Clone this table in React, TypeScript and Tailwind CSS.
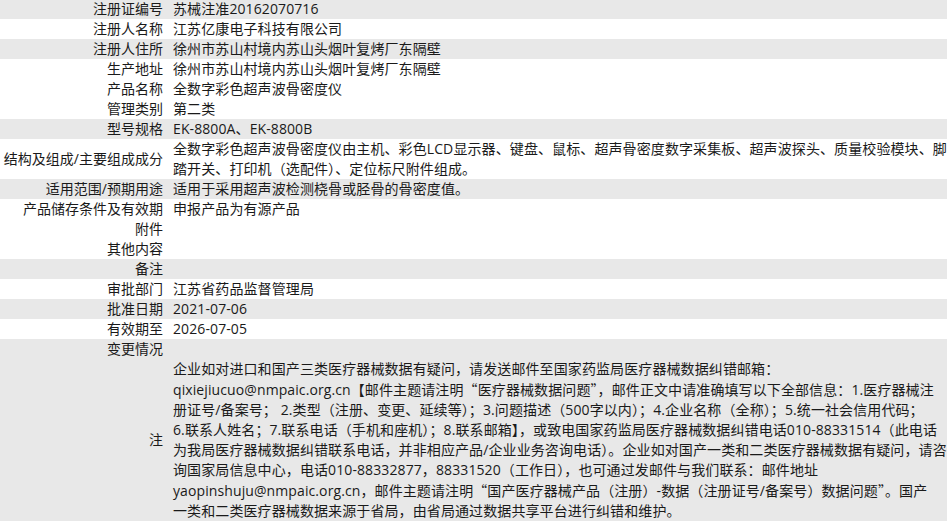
import { Fragment } from "react";

const rows: { label: string; value?: string[]; gray?: boolean }[] = [
  { label: "注册证编号", value: ["苏械注准20162070716"], gray: true },
  { label: "注册人名称", value: ["江苏亿康电子科技有限公司"] },
  { label: "注册人住所", value: ["徐州市苏山村境内苏山头烟叶复烤厂东隔壁"], gray: true },
  { label: "生产地址", value: ["徐州市苏山村境内苏山头烟叶复烤厂东隔壁"] },
  { label: "产品名称", value: ["全数字彩色超声波骨密度仪"] },
  { label: "管理类别", value: ["第二类"] },
  { label: "型号规格", value: ["EK-8800A、EK-8800B"], gray: true },
  {
    label: "结构及组成/主要组成成分",
    value: [
      "全数字彩色超声波骨密度仪由主机、彩色LCD显示器、键盘、鼠标、超声骨密度数字采集板、超声波探头、质量校验模块、脚",
      "踏开关、打印机（选配件）、定位标尺附件组成。",
    ],
  },
  { label: "适用范围/预期用途", value: ["适用于采用超声波检测桡骨或胫骨的骨密度值。"], gray: true },
  { label: "产品储存条件及有效期", value: ["申报产品为有源产品"] },
  { label: "附件" },
  { label: "其他内容" },
  { label: "备注", gray: true },
  { label: "审批部门", value: ["江苏省药品监督管理局"] },
  { label: "批准日期", value: ["2021-07-06"], gray: true },
  { label: "有效期至", value: ["2026-07-05"] },
  { label: "变更情况", gray: true },
  {
    label: "注",
    gray: true,
    value: [
      "企业如对进口和国产三类医疗器械数据有疑问，请发送邮件至国家药监局医疗器械数据纠错邮箱：",
      "qixiejiucuo@nmpaic.org.cn【邮件主题请注明“医疗器械数据问题”，邮件正文中请准确填写以下全部信息：1.医疗器械注",
      "册证号/备案号； 2.类型（注册、变更、延续等）；3.问题描述（500字以内）；4.企业名称（全称）；5.统一社会信用代码；",
      "6.联系人姓名；7.联系电话（手机和座机）；8.联系邮箱】，或致电国家药监局医疗器械数据纠错电话010-88331514（此电话",
      "为我局医疗器械数据纠错联系电话，并非相应产品/企业业务咨询电话）。企业如对国产一类和二类医疗器械数据有疑问，请咨",
      "询国家局信息中心，电话010-88332877，88331520（工作日），也可通过发邮件与我们联系：邮件地址",
      "yaopinshuju@nmpaic.org.cn，邮件主题请注明“国产医疗器械产品（注册）-数据（注册证号/备案号）数据问题”。国产",
      "一类和二类医疗器械数据来源于省局，由省局通过数据共享平台进行纠错和维护。",
    ],
  },
];

// curly quotes should take the full-width CJK glyph, like the source page
function Line({ text }: { text: string }) {
  const parts = text.split(/([“”])/);
  return (
    <div>
      {parts.map((p, i) =>
        p === "“" || p === "”" ? (
          <span key={i} className="font-['Noto_Sans_CJK_SC',sans-serif]">
            {p}
          </span>
        ) : (
          <Fragment key={i}>{p}</Fragment>
        )
      )}
    </div>
  );
}

export default function App() {
  return (
    <div className="w-[947px] h-[521px] overflow-hidden bg-white text-[14px] leading-[20px] text-[#1a1a1a] font-['Open_Sans','Noto_Sans_CJK_SC',sans-serif]">
      <div className="-mt-px">
        {rows.map((row) => (
          <div
            key={row.label}
            className={`grid grid-cols-[168px_1fr] ${row.gray ? "bg-[#e8e8e8]" : "bg-white"}`}
          >
            <div className="flex items-center justify-end pr-[5px] whitespace-nowrap min-h-[20px]">
              {row.label}
            </div>
            <div className="pl-[5px] pr-1 whitespace-nowrap tracking-[0.1px]">
              {row.value?.map((line, i) => (
                <Line key={i} text={line} />
              ))}
            </div>
          </div>
        ))}
      </div>
    </div>
  );
}
